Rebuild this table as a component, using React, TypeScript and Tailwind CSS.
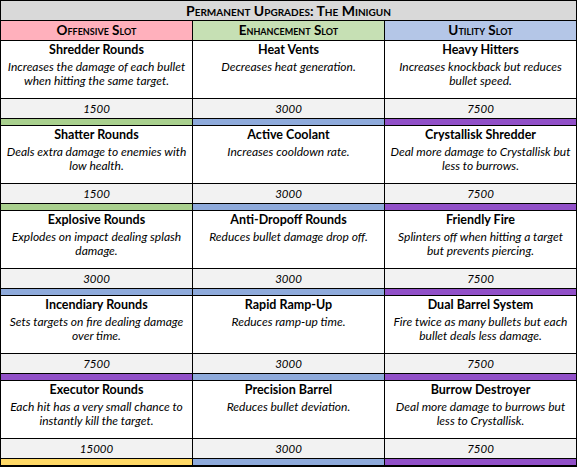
import React from "react";

type Cell = { name: string; desc: string[]; cost: string };

const bars: Record<string, string> = {
  green: "bg-[#a9d08e]",
  blue: "bg-[#8eaadb]",
  purple: "bg-[#9150c8]",
  yellow: "bg-[#ffd966]",
};

const rows: { cells: Cell[]; bars: string[] }[] = [
  {
    cells: [
      { name: "Shredder Rounds", desc: ["Increases the damage of each bullet", "when hitting the same target."], cost: "1500" },
      { name: "Heat Vents", desc: ["Decreases heat generation."], cost: "3000" },
      { name: "Heavy Hitters", desc: ["Increases knockback but reduces", "bullet speed."], cost: "7500" },
    ],
    bars: ["green", "blue", "purple"],
  },
  {
    cells: [
      { name: "Shatter Rounds", desc: ["Deals extra damage to enemies with", "low health."], cost: "1500" },
      { name: "Active Coolant", desc: ["Increases cooldown rate."], cost: "3000" },
      { name: "Crystallisk Shredder", desc: ["Deal more damage to Crystallisk but", "less to burrows."], cost: "7500" },
    ],
    bars: ["green", "blue", "purple"],
  },
  {
    cells: [
      { name: "Explosive Rounds", desc: ["Explodes on impact dealing splash", "damage."], cost: "3000" },
      { name: "Anti-Dropoff Rounds", desc: ["Reduces bullet damage drop off."], cost: "3000" },
      { name: "Friendly Fire", desc: ["Splinters off when hitting a target", "but prevents piercing."], cost: "7500" },
    ],
    bars: ["blue", "blue", "purple"],
  },
  {
    cells: [
      { name: "Incendiary Rounds", desc: ["Sets targets on fire dealing damage", "over time."], cost: "7500" },
      { name: "Rapid Ramp-Up", desc: ["Reduces ramp-up time."], cost: "3000" },
      { name: "Dual Barrel System", desc: ["Fire twice as many bullets but each", "bullet deals less damage."], cost: "7500" },
    ],
    bars: ["purple", "blue", "purple"],
  },
  {
    cells: [
      { name: "Executor Rounds", desc: ["Each hit has a very small chance to", "instantly kill the target."], cost: "15000" },
      { name: "Precision Barrel", desc: ["Reduces bullet deviation."], cost: "3000" },
      { name: "Burrow Destroyer", desc: ["Deal more damage to burrows but", "less to Crystallisk."], cost: "7500" },
    ],
    bars: ["yellow", "blue", "purple"],
  },
];

const App = () => {
  return (
    <div className="w-[577px] h-[467px] bg-white font-['Lato',sans-serif] text-black">
      <div className="grid grid-cols-[191px_191px_191px] grid-rows-[19px_19px_repeat(5,57px_19px_6px)] gap-px bg-black border border-black border-b-2">
        <div className="col-span-3 bg-[#d9d9d9] flex items-center justify-center text-[14px] font-bold [font-variant-caps:small-caps]">
          Permanent Upgrades: The Minigun
        </div>
        <div className="bg-[#ffb0bc] flex items-center justify-center text-[13.5px] font-bold [font-variant-caps:small-caps]">
          Offensive Slot
        </div>
        <div className="bg-[#c6e0b4] flex items-center justify-center text-[13.5px] font-bold [font-variant-caps:small-caps]">
          Enhancement Slot
        </div>
        <div className="bg-[#b4c6e7] flex items-center justify-center text-[13.5px] font-bold [font-variant-caps:small-caps]">
          Utility Slot
        </div>
        {rows.map((row, i) => (
          <React.Fragment key={i}>
            {row.cells.map((c) => (
              <div key={c.name} className="bg-white flex flex-col items-center pt-[1px] text-center">
                <div className="text-[12.5px] font-bold leading-[16px]">{c.name}</div>
                <div className="mt-[2px] text-[12px] italic leading-[14px] whitespace-nowrap">
                  {c.desc.map((l) => (
                    <div key={l}>{l}</div>
                  ))}
                </div>
              </div>
            ))}
            {row.cells.map((c) => (
              <div key={c.name + "-cost"} className="bg-[#f2f2f2] flex items-center justify-center text-[11.5px] italic">
                {c.cost}
              </div>
            ))}
            {row.bars.map((b, j) => (
              <div key={j} className={bars[b]} />
            ))}
          </React.Fragment>
        ))}
      </div>
    </div>
  );
};

export default App;
